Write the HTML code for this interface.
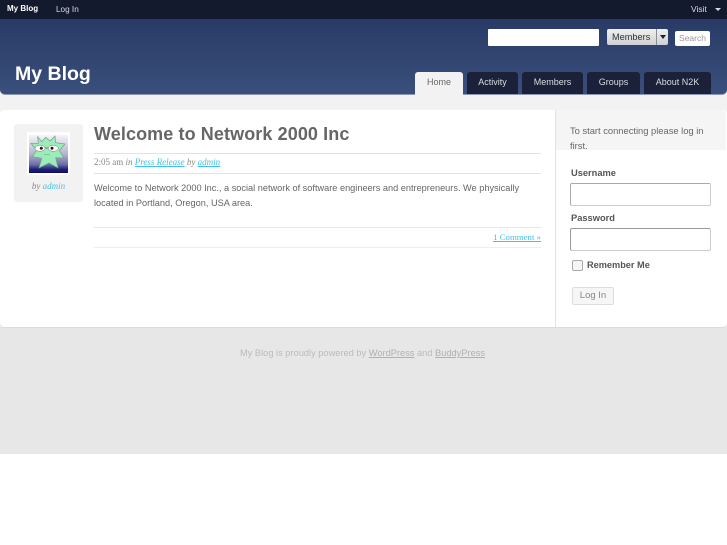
<!DOCTYPE html>
<html lang="en">
<head>
<meta charset="utf-8">
<title>My Blog</title>
<style>
html,body{margin:0;padding:0;background:#fff;}
body{width:727px;height:545px;position:relative;overflow:hidden;font-family:"Liberation Sans",sans-serif;}
.a{position:absolute;white-space:nowrap;}
a{color:inherit;}
.tab{position:absolute;top:72px;height:22px;background:#1a2138;color:#d8dce6;font-size:9px;line-height:21px;text-align:center;border-radius:3px 3px 0 0;}
</style>
</head>
<body>
<div class="a" style="left:0;top:0;width:727px;height:454px;background:#e7e7e7;"></div>
<div class="a" style="left:0;top:0;width:727px;height:327px;background:#f2f2f2;"></div>
<div class="a" style="left:0;top:0;width:727px;height:19px;background:#141a2d;"></div>
<div class="a" style="left:0;top:19px;width:727px;height:75px;background:linear-gradient(#293a66,#3a4f7c);border-radius:0 0 5px 5px;border-bottom:1px solid #8d96b5;"></div>

<div class="a" style="left:7px;top:3px;font-size:8px;line-height:12px;font-weight:bold;color:#fff;">My Blog</div>
<div class="a" style="left:56px;top:3px;font-size:8.2px;line-height:13px;color:#d8dce6;">Log In</div>
<div class="a" style="left:691px;top:3px;font-size:8.5px;line-height:13px;color:#d8dce6;">Visit</div>
<div class="a" style="left:715px;top:8px;width:0;height:0;border:3.5px solid transparent;border-top:3.5px solid #d8dce6;border-bottom:0;"></div>

<div class="a" style="left:15px;top:61px;font-size:19.5px;line-height:27px;font-weight:bold;color:#fff;">My Blog</div>

<div class="a" style="left:488px;top:29px;width:111px;height:17px;background:#fff;border-radius:1px;"></div>
<div class="a" style="left:607px;top:29px;width:61px;height:16px;background:linear-gradient(#f0f0f0,#cfd0d3);border-radius:2px;color:#333;font-size:9.2px;line-height:16px;"><span style="position:absolute;left:5px;">Members</span><span style="position:absolute;left:49px;top:0;width:1px;height:16px;background:#8a8d96;"></span><span style="position:absolute;left:52.5px;top:6px;width:0;height:0;border:3px solid transparent;border-top:4px solid #222;border-bottom:0;"></span></div>
<div class="a" style="left:675px;top:31px;width:35px;height:15px;background:#fff;border-radius:2px;color:#999;font-size:8.5px;line-height:15px;text-align:center;">Search</div>

<div class="tab" style="left:415px;width:48px;height:23px;background:#f2f2f2;color:#666;">Home</div>
<div class="tab" style="left:467px;width:51px;">Activity</div>
<div class="tab" style="left:522px;width:61px;">Members</div>
<div class="tab" style="left:587px;width:53px;">Groups</div>
<div class="tab" style="left:644px;width:67px;">About N2K</div>

<div class="a" style="left:0;top:110px;width:727px;height:217px;background:#fff;border-radius:4px;box-shadow:0 1px 0 #dcdcdc;"></div>
<div class="a" style="left:555px;top:110px;width:1px;height:217px;background:#e2e2e2;"></div>
<div class="a" style="left:556px;top:110px;width:170px;height:40px;background:#f5f5f5;border-radius:0 4px 0 0;"></div>

<div class="a" style="left:14px;top:124px;width:69px;height:78px;background:#f2f2f2;border-radius:3px;"></div>
<div class="a" style="left:27px;top:132px;width:43px;height:43px;background:#fff;"></div>
<svg class="a" style="left:29px;top:135px;" width="39" height="38" viewBox="0 0 39 38">
<defs><linearGradient id="g" x1="0" y1="0" x2="0" y2="1"><stop offset="0" stop-color="#f4f4f8"/><stop offset=".5" stop-color="#b4b5d0"/><stop offset=".78" stop-color="#6a6da6"/><stop offset=".9" stop-color="#1d2378"/><stop offset="1" stop-color="#0c1060"/></linearGradient></defs>
<rect width="39" height="38" fill="url(#g)"/>
<path d="M8.7 1.7 L12.7 6.7 L16.7 2.3 L21 6 L26 1 L26.7 7.7 L36 9 L30.3 15.7 L35 23 L26.7 22.7 L29 33 L20 28 L10 33 L12.7 23.3 L3.3 21.7 L7.7 15 L2 8.3 L9.3 8.3 Z" fill="#9aecb8" stroke="#7f9a8c" stroke-width=".7"/>
<ellipse cx="11" cy="13.3" rx="5" ry="3" fill="#fff" stroke="#777" stroke-width=".5"/>
<ellipse cx="24.3" cy="13.3" rx="5" ry="3" fill="#fff" stroke="#777" stroke-width=".5"/>
<circle cx="12.3" cy="13.3" r="1.5" fill="#3a1414"/><circle cx="23" cy="13.3" r="1.5" fill="#3a1414"/>
<path d="M16 13 L19.3 13" stroke="#666" stroke-width=".8"/>
<path d="M15 20 Q18 19 21 20" stroke="#7f9a8c" stroke-width=".6" fill="none"/>
</svg>
<div class="a" style="left:14px;width:69px;top:180px;text-align:center;font-family:'Liberation Serif',serif;font-style:italic;font-size:9px;line-height:13px;color:#888;">by <span style="color:#4bbfe6;">admin</span></div>

<div class="a" style="left:94px;top:122px;font-size:18px;line-height:25px;font-weight:bold;color:#666;letter-spacing:.1px;">Welcome to Network 2000 Inc</div>
<div class="a" style="left:94px;top:153px;width:447px;height:1px;background:#e3e3e3;"></div>
<div class="a" style="left:94px;top:156px;font-family:'Liberation Serif',serif;font-size:9px;line-height:13px;color:#888;">2:05 am <i>in</i> <i><a href="#" style="color:#3fc1ea;">Press Release</a></i> <i>by</i> <i><a href="#" style="color:#3fc1ea;">admin</a></i></div>
<div class="a" style="left:94px;top:173px;width:447px;height:1px;background:#e3e3e3;"></div>
<div class="a" style="left:94px;top:181px;font-size:9.2px;line-height:15px;color:#666;">Welcome to Network 2000 Inc., a social network of software engineers and entrepreneurs. We physically<br>located in Portland, Oregon, USA area.</div>
<div class="a" style="left:94px;top:227px;width:447px;height:1px;background:#e6e6e6;"></div>
<div class="a" style="left:94px;width:447px;top:231px;text-align:right;font-family:'Liberation Serif',serif;font-size:8.8px;line-height:13px;"><a href="#" style="color:#3fc1ea;">1 Comment »</a></div>
<div class="a" style="left:94px;top:247px;width:447px;height:1px;background:#eeeeee;"></div>

<div class="a" style="left:570px;top:124px;font-size:9.35px;line-height:15px;color:#666;">To start connecting please log in</div>
<div class="a" style="left:570px;top:139px;font-size:9.35px;line-height:15px;color:#666;height:11px;overflow:hidden;">first.</div>
<div class="a" style="left:571px;top:167px;font-size:9.3px;line-height:13px;font-weight:bold;color:#555;">Username</div>
<div class="a" style="left:570px;top:183px;width:141px;height:23px;box-sizing:border-box;border:1px solid #aaa;border-bottom-color:#ccc;border-right-color:#ccc;border-radius:2px;background:#fff;"></div>
<div class="a" style="left:571px;top:212px;font-size:9.3px;line-height:13px;font-weight:bold;color:#555;">Password</div>
<div class="a" style="left:570px;top:228px;width:141px;height:23px;box-sizing:border-box;border:1px solid #999;border-bottom-color:#ccc;border-right-color:#ccc;border-radius:2px;background:#fff;"></div>
<div class="a" style="left:572px;top:260px;width:11px;height:11px;box-sizing:border-box;border:1px solid #aaa;border-radius:2px;background:#f6f6f6;"></div>
<div class="a" style="left:587px;top:259px;font-size:9.2px;line-height:13px;font-weight:bold;color:#555;">Remember Me</div>
<div class="a" style="left:572px;top:287px;width:42px;height:18px;box-sizing:border-box;border:1px solid #ddd;border-radius:2px;background:#f6f6f6;color:#888;font-size:9.5px;line-height:16px;text-align:center;">Log In</div>

<div class="a" style="left:240px;top:347px;font-size:9.27px;line-height:13px;color:#bbb;">My Blog is proudly powered by <a href="#" style="color:#b0b0b0;">WordPress</a> and <a href="#" style="color:#b0b0b0;">BuddyPress</a></div>
</body>
</html>
